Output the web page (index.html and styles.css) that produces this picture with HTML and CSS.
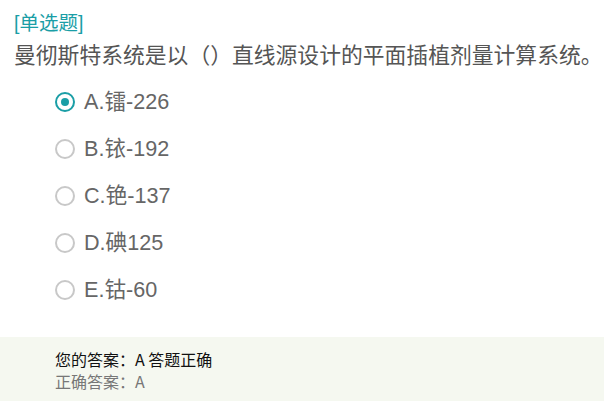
FILE: index.html
```html
<!DOCTYPE html>
<html lang="zh">
<head>
<meta charset="utf-8">
<link rel="stylesheet" href="styles.css">
</head>
<body>
<div class="page">
  <div class="qtype">[单选题]</div>
  <div class="question">曼彻斯特系统是以（）直线源设计的平面插植剂量计算系统。</div>
  <ul class="options">
    <li class="option checked"><span class="radio"></span><span class="label">A.镭-226</span></li>
    <li class="option"><span class="radio"></span><span class="label">B.铱-192</span></li>
    <li class="option"><span class="radio"></span><span class="label">C.铯-137</span></li>
    <li class="option"><span class="radio"></span><span class="label">D.碘125</span></li>
    <li class="option"><span class="radio"></span><span class="label">E.钴-60</span></li>
  </ul>
</div>
<div class="answer">
  <div class="mine">您的答案：A 答题正确</div>
  <div class="correct">正确答案：A</div>
</div>
</body>
</html>
```

FILE: styles.css
```css
html, body {
  margin: 0;
  padding: 0;
  background: #ffffff;
}
body {
  font-family: "Liberation Sans", "Noto Sans CJK SC", sans-serif;
  width: 604px;
  height: 401px;
  overflow: hidden;
}
.page {
  padding: 11px 0 0 14px;
  height: 326px;
}
.qtype {
  font-size: 19.5px;
  line-height: 24px;
  color: #1a9ea6;
}
.question {
  font-size: 21.8px;
  line-height: 30px;
  margin-top: 6px;
  color: #555555;
  white-space: nowrap;
}
.options {
  list-style: none;
  margin: 7px 0 0 0;
  padding: 0 0 0 41px;
}
.option {
  display: flex;
  align-items: center;
  height: 47px;
}
.radio {
  box-sizing: border-box;
  width: 20px;
  height: 20px;
  border: 2px solid #c8c8c8;
  border-radius: 50%;
  display: flex;
  align-items: center;
  justify-content: center;
  margin-right: 9px;
}
.checked .radio {
  border-color: #1a9ea6;
}
.checked .radio::after {
  content: "";
  width: 8px;
  height: 8px;
  border-radius: 50%;
  background: #1a9ea6;
}
.label {
  font-size: 21.6px;
  color: #666666;
  line-height: 30px;
}
.answer {
  background: #f5f8f0;
  height: 64px;
  padding: 11px 0 0 55px;
  box-sizing: border-box;
  font-family: "Noto Sans CJK SC", sans-serif;
  font-size: 16px;
  line-height: 22px;
}
.mine {
  color: #111111;
}
.correct {
  color: #777777;
}
```
